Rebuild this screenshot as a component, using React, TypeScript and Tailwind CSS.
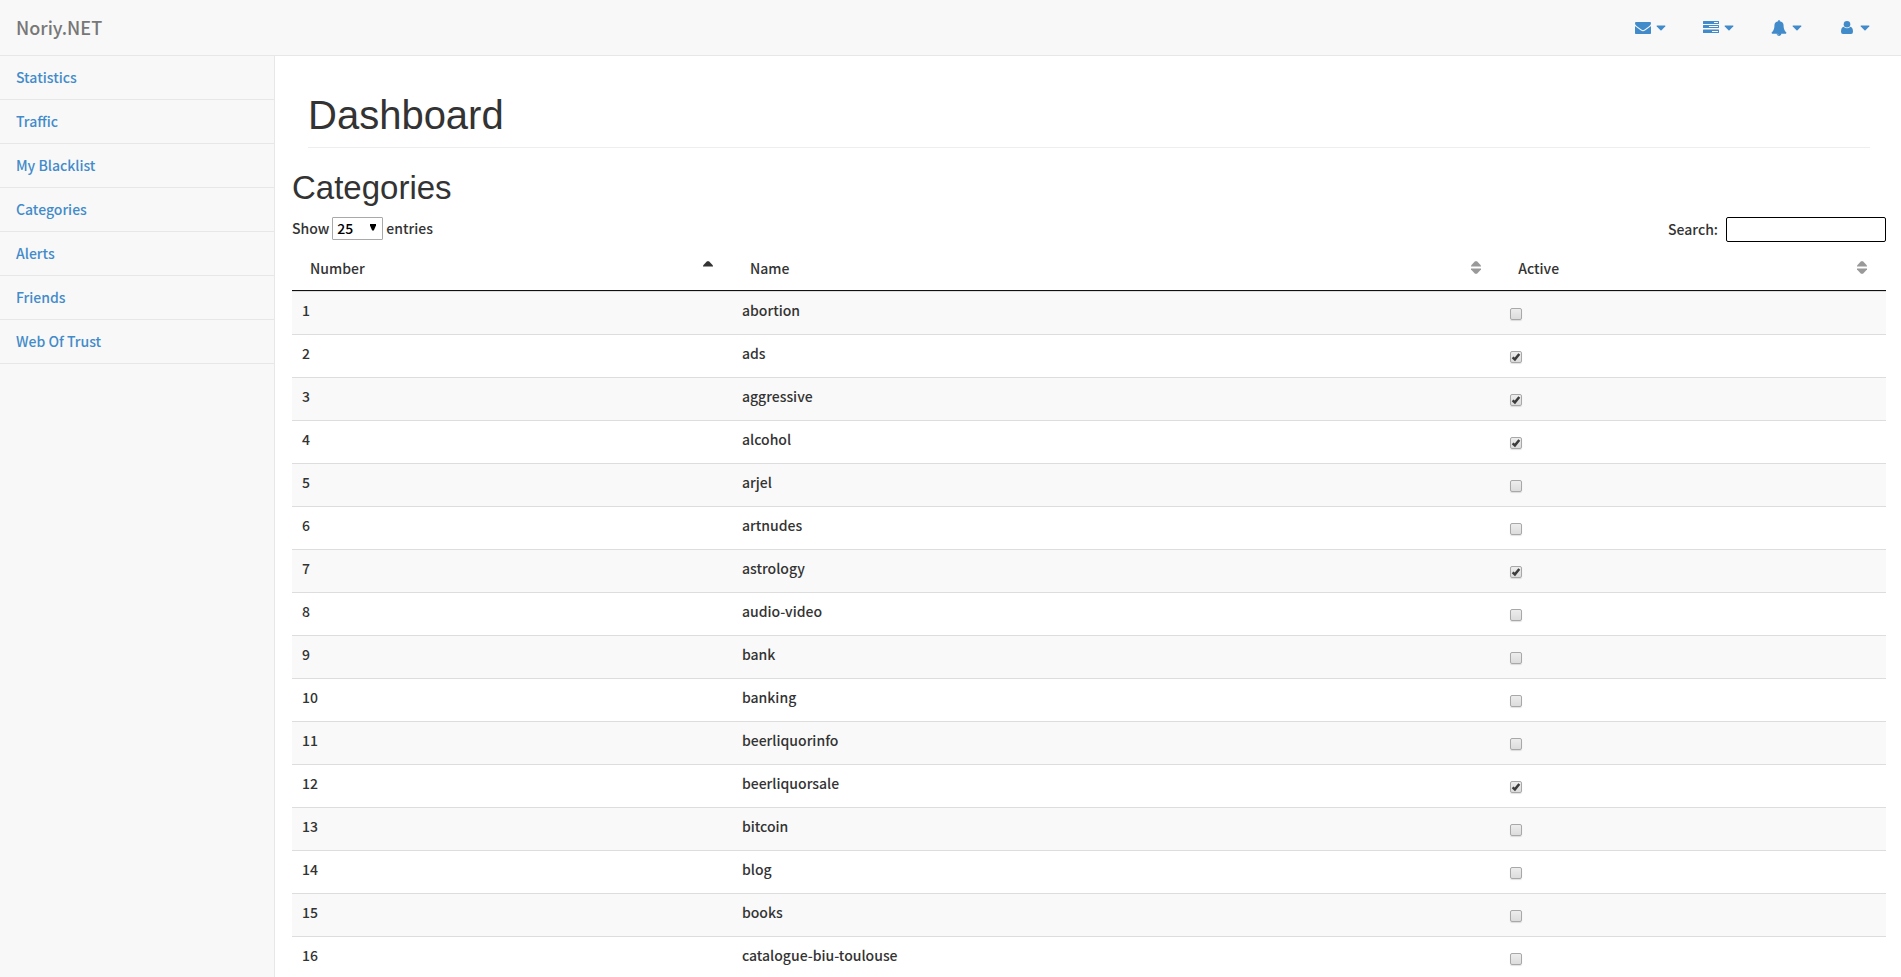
import { useState, type ReactNode } from "react";

const navItems = ["Statistics", "Traffic", "My Blacklist", "Categories", "Alerts", "Friends", "Web Of Trust"];

const categories: { name: string; active: boolean }[] = [
  { name: "abortion", active: false },
  { name: "ads", active: true },
  { name: "aggressive", active: true },
  { name: "alcohol", active: true },
  { name: "arjel", active: false },
  { name: "artnudes", active: false },
  { name: "astrology", active: true },
  { name: "audio-video", active: false },
  { name: "bank", active: false },
  { name: "banking", active: false },
  { name: "beerliquorinfo", active: false },
  { name: "beerliquorsale", active: true },
  { name: "bitcoin", active: false },
  { name: "blog", active: false },
  { name: "books", active: false },
  { name: "catalogue-biu-toulouse", active: false },
];

function EnvelopeIcon() {
  return (
    <svg width="16" height="16" viewBox="0 0 16 16" fill="currentColor" aria-hidden="true">
      <path d="M1 2h14q1 0 1 1.300 0 1.500-1.600 2.700L9.600 9.400Q8.600 10.200 8 10.200T6.400 9.400L1.600 6Q0 4.800 0 3.300 0 2 1 2z" />
      <path d="M0 6q.4.500.9.800l4.700 3.400q1.500 1.100 2.400 1.100t2.400-1.100l4.700-3.400q.5-.3.900-.8v7.200q0 .8-.8.800H.8Q0 14 0 13.200z" />
    </svg>
  );
}

function TasksIcon() {
  return (
    <svg width="16" height="16" viewBox="0 0 16 16" fill="currentColor" aria-hidden="true">
      <path fillRule="evenodd" d="M.5 1h15q.5 0 .5.500v2q0 .5-.5.500H.5Q0 4 0 3.500v-2Q0 1 .5 1zM11 2v1h4V2z" />
      <path fillRule="evenodd" d="M.5 5h15q.5 0 .5.500v2q0 .5-.5.500H.5Q0 8 0 7.500v-2Q0 5 .5 5zM6 6v1h9V6z" />
      <path fillRule="evenodd" d="M.5 9.500h15q.5 0 .5.500v2.500q0 .5-.5.500H.5q-.5 0-.5-.5V10q0-.5.5-.5zM9 11v1h6v-1z" />
    </svg>
  );
}

function BellIcon() {
  return (
    <svg width="16" height="16" viewBox="0 0 1792 1792" fill="currentColor" aria-hidden="true">
      <path d="M912 1696q0-16-16-16-59 0-101.500-42.500t-42.500-101.500q0-16-16-16t-16 16q0 73 51.500 124.500t124.500 51.500q16 0 16-16zm816-288q0 52-38 90t-90 38h-448q0 106-75 181t-181 75-181-75-75-181h-448q-52 0-90-38t-38-90q50-42 91-88t85-119.500 74.500-158.500 50-206 19.500-260q0-152 117-282.500t307-158.500q-8-19-8-39 0-40 28-68t68-28 68 28 28 68q0 20-8 39 190 28 307 158.500t117 282.500q0 139 19.500 260t50 206 74.500 158.500 85 119.500 91 88z" />
    </svg>
  );
}

function UserIcon() {
  return (
    <svg width="16" height="16" viewBox="0 0 16 16" fill="currentColor" aria-hidden="true">
      <circle cx="8" cy="4.300" r="3.300" />
      <path d="M4.700 6.800Q6 8.300 8 8.300t3.300-1.500Q14 7.300 14 11.700 14 14 12 14H4q-2 0-2-2.300 0-4.400 2.700-4.900z" />
    </svg>
  );
}

function MenuButton({ label, children }: { label: string; children: ReactNode }) {
  return (
    <button type="button" aria-label={label} className="flex h-full w-17 items-center justify-center gap-1 text-[#428bca]">
      <span className="flex w-[18px] justify-center">{children}</span>
      <svg width="10" height="16" viewBox="0 0 10 16" fill="currentColor" aria-hidden="true">
        <path d="M1.100 5.500h7.800q.9.200.3.900L5.500 10.300q-.5.400-1 0L.8 6.400Q.2 5.700 1.100 5.500z" />
      </svg>
    </button>
  );
}

function SortIcon({ sorted }: { sorted?: boolean }) {
  return (
    <svg width="10" height="13" viewBox="0 0 10 13" className={sorted ? "fill-[#333]" : "fill-[#999]"} aria-hidden="true">
      <path d="M0 5.500V4.500L4 .3h2l4 4.200v1z" />
      {!sorted && <path d="M0 7.500v1l4 4.200h2l4-4.200v-1z" />}
    </svg>
  );
}

function HeaderCell({ label, width, sorted }: { label: string; width: string; sorted?: boolean }) {
  return (
    <th className={`${width} border-b border-[#111] pt-2 pr-[19px] pb-3 pl-[18px] font-medium`} aria-sort={sorted ? "ascending" : "none"}>
      <button type="button" className="flex w-full items-start justify-between">
        <span>{label}</span>
        <span className="pt-[3px]">
          <SortIcon sorted={sorted} />
        </span>
      </button>
    </th>
  );
}

function Checkbox({ label, checked, onChange }: { label: string; checked: boolean; onChange: () => void }) {
  return (
    <span className="relative block size-3">
      <input
        type="checkbox"
        aria-label={label}
        checked={checked}
        onChange={onChange}
        className="block size-3 appearance-none rounded-[2px] border border-[#a8a8a8] bg-linear-to-b from-[#ededed] to-[#dcdcdc] shadow-[0_1px_1px_rgba(0,0,0,0.12)]"
      />
      {checked && (
        <svg width="12" height="12" viewBox="0 0 12 12" className="pointer-events-none absolute inset-0" aria-hidden="true">
          <path d="M2.600 6.300 4.900 8.400 9.300 3" fill="none" stroke="#3c3c3c" strokeWidth="2.500" />
        </svg>
      )}
    </span>
  );
}

export default function App() {
  const [rows, setRows] = useState(categories);
  const toggle = (index: number) =>
    setRows((current) => current.map((row, i) => (i === index ? { ...row, active: !row.active } : row)));

  return (
    <div className="flex min-h-screen flex-col bg-white font-['Source_Sans_Pro','Noto_Sans_CJK_SC',sans-serif] text-sm leading-5 font-medium text-[#333]">
      <header className="flex h-14 items-center justify-between border-b border-[#e7e7e7] bg-[#f8f8f8] pr-[13px] pl-4">
        <a href="#" className="pb-px text-lg leading-6 font-medium text-[#777]">
          Noriy.NET
        </a>
        <nav className="flex h-full" aria-label="Account">
          <MenuButton label="Messages"><EnvelopeIcon /></MenuButton>
          <MenuButton label="Tasks"><TasksIcon /></MenuButton>
          <MenuButton label="Alerts"><BellIcon /></MenuButton>
          <MenuButton label="User"><UserIcon /></MenuButton>
        </nav>
      </header>

      <div className="flex grow">
        <aside className="w-[275px] shrink-0 border-r border-[#e7e7e7] bg-[#f8f8f8]">
          <ul>
            {navItems.map((item) => (
              <li key={item} className="border-b border-[#e7e7e7]">
                <a href="#" className="block px-4 pt-[11px] pb-3 text-[#428bca]">
                  {item}
                </a>
              </li>
            ))}
          </ul>
        </aside>

        <main className="min-w-0 grow pr-[15px] pl-[17px]">
          <h1 className="mx-4 border-b border-[#eee] pt-[37px] pb-[10px] font-['Liberation_Sans',Arial,sans-serif] text-[40px] leading-[44px] font-normal">
            Dashboard
          </h1>
          <h2 className="pt-[21px] font-['Liberation_Sans',Arial,sans-serif] text-[33px] leading-[38px] font-normal">
            Categories
          </h2>

          <div className="flex items-start justify-between pt-[10px]">
            <label className="flex items-start gap-[3px]">
              <span className="pt-px">Show</span>
              <span className="relative block">
                <select defaultValue="25" className="block h-[23px] w-[51px] appearance-none rounded-[1px] border border-[#a9a9a9] bg-white pb-px pl-1 leading-5 font-medium text-black">
                  <option>10</option>
                  <option>25</option>
                  <option>50</option>
                  <option>100</option>
                </select>
                <svg width="6" height="7" viewBox="0 0 6 7" className="pointer-events-none absolute top-[7px] right-[7px]" aria-hidden="true">
                  <path d="M0 0h6v1.500L3.800 6.500H2.200L0 1.500z" />
                </svg>
              </span>
              <span className="pt-px">entries</span>
            </label>
            <label className="flex items-start gap-2">
              <span className="pt-0.5">Search:</span>
              <input type="search" className="h-[25px] w-40 rounded-[2px] border border-black bg-white px-1" />
            </label>
          </div>

          <table className="mt-2 w-full table-fixed border-separate border-spacing-0 text-left">
            <thead>
              <tr>
                <HeaderCell label="Number" width="w-[27.6%]" sorted />
                <HeaderCell label="Name" width="w-[48.2%]" />
                <HeaderCell label="Active" width="w-[24.2%]" />
              </tr>
            </thead>
            <tbody>
              {rows.map((row, index) => (
                <tr key={row.name} className="odd:bg-[#f9f9f9] *:h-[43px] *:border-t *:border-[#ddd] *:px-[10px] *:align-top">
                  <td className="pt-2">{index + 1}</td>
                  <td className="pt-2">{row.name}</td>
                  <td className="pt-4">
                    <Checkbox label={row.name} checked={row.active} onChange={() => toggle(index)} />
                  </td>
                </tr>
              ))}
            </tbody>
          </table>
        </main>
      </div>
    </div>
  );
}
